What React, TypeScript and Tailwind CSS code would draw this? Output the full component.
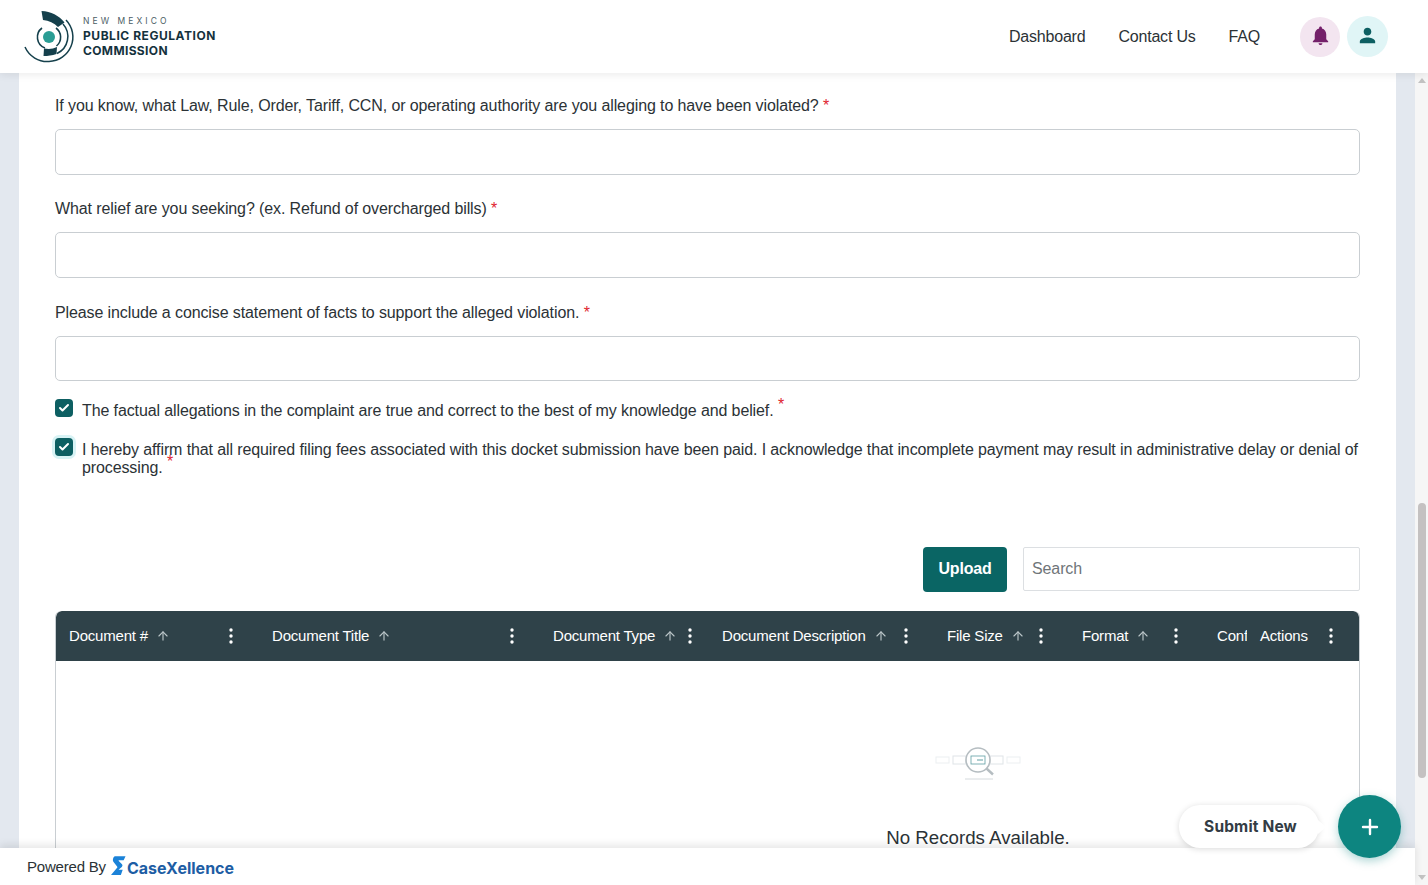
import React from 'react';
import { Plus, ArrowUp, Check } from 'lucide-react';

const questions = [
  'If you know, what Law, Rule, Order, Tariff, CCN, or operating authority are you alleging to have been violated?',
  'What relief are you seeking? (ex. Refund of overcharged bills)',
  'Please include a concise statement of facts to support the alleged violation.',
];

// widths measured from the reference
const columns = [
  { title: 'Document #', width: 'w-[202px]', pad: 'pl-[13px]', menu: 'right-[25px]' },
  { title: 'Document Title', width: 'w-[281px]', pad: 'pl-[14px]', menu: 'right-[25px]' },
  { title: 'Document Type', width: 'w-[169px]', pad: 'pl-[14px]', menu: 'right-[16px]' },
  { title: 'Document Description', width: 'w-[225px]', pad: 'pl-[14px]', menu: 'right-[25px]' },
  { title: 'File Size', width: 'w-[135px]', pad: 'pl-[14px]', menu: 'right-[25px]' },
  { title: 'Format', width: 'w-[135px]', pad: 'pl-[14px]', menu: 'right-[25px]' },
];

const Dots = () => (
  <svg viewBox="0 0 4 16" className="w-[4px] h-[16px] fill-white">
    <circle cx="2" cy="2" r="1.7" />
    <circle cx="2" cy="8" r="1.7" />
    <circle cx="2" cy="14" r="1.7" />
  </svg>
);

const Logo = () => (
  <svg viewBox="0 0 54 54" className="w-[54px] h-[54px] shrink-0" fill="none">
    <circle cx="26" cy="27" r="6" fill="#2a9d94" />
    {/* inner ring */}
    <path d="M19 18 A 11.5 11.5 0 0 0 22 38" stroke="#15404c" strokeWidth="1.6" />
    <path d="M33 18 A 11.5 11.5 0 0 1 33.5 36" stroke="#15404c" strokeWidth="1.6" />
    {/* top and bottom wedges */}
    <path d="M18.5 1 C 28 1.5 36 5.5 41.5 12.5 L 35 17 C 31 13 26 10.5 20 10 Z" fill="#15404c" />
    <path d="M21 38.5 C 26 39.5 30 39 34 37 L 33.5 44 C 29 45.5 25 46 20.5 46 Z" fill="#15404c" />
    {/* outer arcs */}
    <path d="M43 10 A 24.5 24.5 0 0 1 26 51.5 A 24.5 24.5 0 0 1 2 37" stroke="#15404c" strokeWidth="1.5" />
    <path d="M40 14 A 18.7 18.7 0 0 1 34 43.5" stroke="#15404c" strokeWidth="1.5" />
  </svg>
);

const EmptyPicture = () => (
  <svg viewBox="0 0 90 40" className="w-[90px] h-[40px]" fill="none">
    <rect x="3" y="12" width="13" height="6" stroke="#eceff1" />
    <rect x="20" y="11" width="13" height="8" stroke="#dfe4e7" />
    <rect x="38" y="11" width="14" height="8" stroke="#5f9fa3" strokeWidth="0.8" />
    <path d="M44 15 H50" stroke="#5f9fa3" strokeWidth="1" />
    <rect x="57" y="11" width="13" height="8" stroke="#dfe4e7" />
    <rect x="74" y="12" width="13" height="6" stroke="#eceff1" />
    <circle cx="45" cy="15" r="12" stroke="#b5bdc1" strokeWidth="1.6" fill="none" />
    <path d="M53.5 23.5 L60 29.5" stroke="#b5bdc1" strokeWidth="2.4" />
    <path d="M32 34 H60" stroke="#d5dadd" strokeWidth="1" />
  </svg>
);

function Required({ raised }: { raised?: boolean }) {
  return <span className={`text-[#e0262f] ${raised ? 'relative -top-[6px]' : ''}`}>*</span>;
}

function Checkbox({ focused }: { focused?: boolean }) {
  return (
    <span
      className={`w-[18px] h-[18px] rounded-[4px] bg-[#0d5f62] flex items-center justify-center shrink-0 ${
        focused ? 'ring-[3px] ring-[#d8f3f5]' : ''
      }`}
    >
      <Check className="w-[12px] h-[12px] text-white" strokeWidth={4} />
    </span>
  );
}

export default function App() {
  return (
    <div className="relative w-[1428px] h-[885px] flex flex-col overflow-hidden bg-white font-['Liberation_Sans',Arial,sans-serif] text-[#2b3236]">
      {/* Header */}
      <header className="relative z-10 h-[73px] shrink-0 bg-white shadow-[0_2px_8px_rgba(0,0,0,0.08)] flex items-center pl-[23px] pr-[40px]">
        <Logo />
        <div className="ml-[6px] font-['Inter',sans-serif] text-[#15323d]">
          <div className="text-[8.5px] leading-[11px] tracking-[0.36em] font-normal text-[#4b5d64]">NEW MEXICO</div>
          <div className="text-[12px] leading-[15px] mt-[1px] font-bold tracking-[0.045em]">PUBLIC REGULATION</div>
          <div className="text-[12px] leading-[15px] font-bold tracking-[0.03em]">COMMISSION</div>
        </div>
        <nav className="ml-auto flex items-center gap-[33px] text-[16px] text-[#2b3236] tracking-[-0.2px]">
          <span>Dashboard</span>
          <span>Contact Us</span>
          <span>FAQ</span>
        </nav>
        <div className="ml-[40px] flex items-center gap-[7px]">
          <span className="w-[40px] h-[40px] rounded-full bg-[#f3e5f0] flex items-center justify-center">
            <svg viewBox="0 0 24 24" className="w-[23px] h-[23px] -mt-[2px] fill-[#74206a]">
              <path d="M12 22c1.1 0 2-.9 2-2h-4c0 1.1.89 2 2 2zm6-6v-5c0-3.07-1.64-5.64-4.5-6.32V4c0-.83-.67-1.5-1.5-1.5s-1.5.67-1.5 1.5v.68C7.63 5.36 6 7.92 6 11v5l-2 2v1h16v-1l-2-2z" />
            </svg>
          </span>
          <span className="w-[41px] h-[41px] rounded-full bg-[#e0f5f6] flex items-center justify-center">
            <svg viewBox="0 0 24 24" className="w-[23px] h-[23px] -mt-[2px] fill-[#0d5f62]">
              <path d="M12 12c2.21 0 4-1.79 4-4s-1.79-4-4-4-4 1.79-4 4 1.79 4 4 4zm0 2c-2.67 0-8 1.34-8 4v2h16v-2c0-2.66-5.33-4-8-4z" />
            </svg>
          </span>
        </div>
      </header>

      <div className="flex-1 min-h-0 flex">
        <div className="w-[1415px] flex flex-col min-h-0">
          {/* Page body, cut off by the footer */}
          <main className="flex-1 min-h-0 overflow-hidden bg-[#e3e8ef] pl-[19px] pr-[19px]">
            <div className="bg-white h-full overflow-hidden px-[36px] pt-[23px] text-[16px] tracking-[-0.11px]">
              <div className="flex flex-col gap-[24.4px]">
                {questions.map((q, i) => (
                  <div key={q}>
                    <label className="block leading-[20px] mb-[13px]">
                      {q} <Required />
                    </label>
                    <input
                      className={`block w-full ${i === 2 ? 'h-[45px]' : 'h-[46px]'} rounded-[5px] border border-[#c9ced2] bg-white`}
                    />
                  </div>
                ))}
              </div>

              <div className="mt-[18px] flex items-start gap-[9px]">
                <Checkbox />
                <p className="leading-[18px] pt-[3px]">
                  The factual allegations in the complaint are true and correct to the best of my knowledge and belief. <Required raised />
                </p>
              </div>
              <div className="mt-[18px] flex items-start gap-[9px]">
                <Checkbox focused />
                <p className="leading-[18px] pt-[3px]">
                  I hereby affirm that all required filing fees associated with this docket submission have been paid. I acknowledge that incomplete payment may result in administrative delay or denial of processing. <Required raised />
                </p>
              </div>

              <div className="mt-[70px] flex justify-end items-start gap-[16px]">
                <button className="w-[84px] h-[45px] rounded-[4px] bg-[#0a6564] text-white font-bold text-[16px] tracking-[-0.2px]">Upload</button>
                <input
                  placeholder="Search"
                  className="w-[337px] h-[44px] border border-[#dcdfe2] rounded-[2px] px-[8px] text-[16px] placeholder:text-[#6f7579]"
                />
              </div>

              {/* Documents table */}
              <div className="mt-[19px] rounded-[6px] border border-[#c9ced2] border-t-0 h-[400px] overflow-hidden">
                <div className="h-[50px] bg-[#2f4249] flex items-center text-white text-[15px] tracking-[-0.2px] rounded-t-[6px]">
                  {columns.map((c) => (
                    <div key={c.title} className={`relative h-full ${c.width} ${c.pad} shrink-0 flex items-center`}>
                      <span>{c.title}</span>
                      <ArrowUp className="w-[14px] h-[14px] ml-[8px] text-[#b9c4c7]" />
                      <span className={`absolute top-[17px] ${c.menu}`}>
                        <Dots />
                      </span>
                    </div>
                  ))}
                  <div className="w-[44px] shrink-0 pl-[14px] overflow-hidden whitespace-nowrap">Confidential</div>
                  <div className="relative h-full flex-1 flex items-center pl-[13px]">
                    <span>Actions</span>
                    <span className="absolute top-[17px] right-[26px]">
                      <Dots />
                    </span>
                  </div>
                </div>
                <div className="ml-[541px] flex flex-col items-center pt-[84px]">
                  <EmptyPicture />
                  <p className="mt-[41px] text-[18.7px] leading-[24px] tracking-normal">No Records Available.</p>
                </div>
              </div>
            </div>
          </main>

          {/* Footer */}
          <footer className="relative h-[37px] shrink-0 bg-white shadow-[0_-3px_8px_rgba(0,0,0,0.1)] flex items-center pl-[27px] text-[15px] tracking-[-0.2px] text-[#2b3236]">
            <span className="pt-[1px]">Powered By</span>
            <svg viewBox="0 0 16 20" className="w-[15px] h-[19px] ml-[5px] -mt-[3px] fill-[#1b82d8]">
              <path d="M4 0 H15.5 L13.5 4.5 H8.5 C 8 4.5 8 5 8.5 5.5 L 11.5 8.5 C 12.5 9.5 12.5 10.5 11.5 11.5 L 8 14.5 H12.5 L 10.5 20 H0 L 6.5 12.5 C 7 12 7 11.5 6.5 11 L 2.5 6 C 1.5 4.5 2 1 4 0 Z" />
            </svg>
            <span className="ml-[1px] pt-[2px] font-['Inter',sans-serif] font-bold text-[16px] tracking-[0px] text-[#1d5da4]">CaseXellence</span>
          </footer>
        </div>

        {/* Window scrollbar */}
        <div className="w-[13px] shrink-0 bg-[#f6f6f6] flex flex-col items-center pt-[5px] pb-[5px]">
          <span className="w-0 h-0 border-x-[4px] border-x-transparent border-b-[5px] border-b-[#c2c2c2]" />
          <span className="w-[8px] h-[275px] mt-[420px] rounded-[4px] bg-[#c4c1c1]" />
          <span className="mt-auto w-0 h-0 border-x-[4px] border-x-transparent border-t-[5px] border-t-[#c2c2c2]" />
        </div>
      </div>

      {/* Floating submit button */}
      <div className="absolute left-[1179px] top-[795px] flex items-center">
        <div className="relative w-[140px] h-[43px] rounded-[21px] bg-white shadow-[0_1px_6px_rgba(0,0,0,0.15)] flex items-center justify-center font-['Inter',sans-serif] font-bold text-[15.5px] tracking-[0.01em] text-[#333c44]">
          <span className="ml-[3px]">Submit New</span>
          <span className="absolute -right-[7px] top-[15px] w-0 h-0 border-y-[7px] border-y-transparent border-l-[8px] border-l-white" />
        </div>
        <button className="ml-[19px] w-[63px] h-[63px] rounded-full bg-[#0d8580] shadow-[0_3px_10px_rgba(13,133,128,0.35)] flex items-center justify-center text-white">
          <Plus className="w-[24px] h-[24px]" strokeWidth={2.4} />
        </button>
      </div>
    </div>
  );
}
